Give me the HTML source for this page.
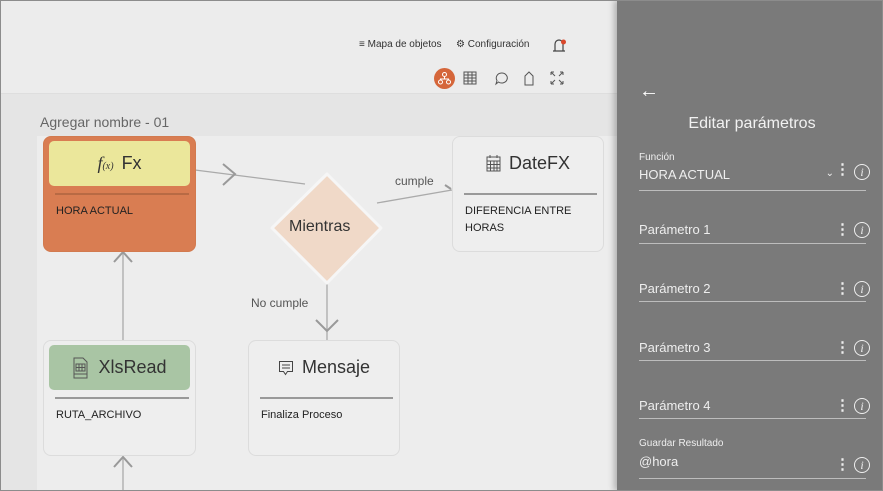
<!DOCTYPE html>
<html><head><meta charset="utf-8"><style>
*{margin:0;padding:0;box-sizing:border-box}
body{width:883px;height:491px;overflow:hidden;background:#e5e5e5;font-family:"Liberation Sans",sans-serif;position:relative}
.a{position:absolute}
.card{position:absolute;border:1px solid #dcdcdc;border-radius:8px;background:#eeeeee}
.hd{position:absolute;left:5px;right:5px;top:4px;height:45px;border-radius:5px;font-size:18px;color:#333;display:flex;align-items:center;justify-content:center;gap:8px}
.ln{position:absolute;left:11px;right:6px;top:56px;height:2px;background:#999}
.tx{position:absolute;left:12px;top:66px;font-size:11px;color:#222;line-height:17px}
.pl{position:absolute;left:639px;width:227px;color:#eee}
.pl .u{position:absolute;left:0;right:0;height:1px;background:#bdbdbd}
.ic{position:absolute;right:-4px;width:16px;height:16px;border:1.3px solid #eee;border-radius:50%;font-family:"Liberation Serif",serif;font-style:italic;font-size:12px;text-align:center;line-height:14px}
.dt{position:absolute;right:16px;font-size:15px;font-weight:bold;line-height:10px}
</style></head><body>
<div class="a" style="left:0;top:0;width:883px;height:491px;border:1px solid #8c8c8c;z-index:10;pointer-events:none"></div>
<div class="a" style="left:0;top:0;width:620px;height:94px;background:#ececec;border-bottom:1px solid #dedede"></div>
<div class="a" style="left:37px;top:136px;width:580px;height:355px;background:#ededed"></div>
<div class="a" style="left:359px;top:39px;font-size:10px;color:#333">≡ Mapa de objetos</div>
<div class="a" style="left:456px;top:39px;font-size:10px;color:#333">⚙ Configuración</div>
<svg class="a" style="left:548px;top:36px" width="22" height="18"><path d="M5 15h12M7 15V8a4 4 0 0 1 8 0v7" fill="none" stroke="#444" stroke-width="1.2"/><circle cx="15.5" cy="6" r="2.5" fill="#d9472b"/></svg>
<div class="a" style="left:434px;top:68px;width:21px;height:21px;border-radius:50%;background:#d5663a"></div>
<svg class="a" style="left:437px;top:71px" width="15" height="15"><g fill="none" stroke="#fff" stroke-width="1"><circle cx="7.5" cy="3.5" r="2"/><circle cx="3.5" cy="11" r="2"/><circle cx="11.5" cy="11" r="2"/><path d="M7.5 5.5v2.5M3.5 9V8h8v1"/></g></svg>
<svg class="a" style="left:463px;top:71px" width="14" height="14"><g fill="none" stroke="#555" stroke-width="1"><rect x="1" y="1" width="12" height="12"/><path d="M1 4h12M1 7h12M1 10h12M5 1v12M9 1v12"/></g></svg>
<svg class="a" style="left:494px;top:71px" width="15" height="15"><path d="M7.5 2a5.5 5 0 1 1-3 9l-2.5 2 1-3.5A5.5 5 0 0 1 7.5 2z" fill="none" stroke="#555"/></svg>
<svg class="a" style="left:522px;top:70px" width="14" height="16"><path d="M3 15V6l4-4 4 4v9z" fill="none" stroke="#555"/></svg>
<svg class="a" style="left:550px;top:71px" width="14" height="14"><path d="M1 1l4 4M13 1l-4 4M1 13l4-4M13 13l-4-4M1 1h3M1 1v3M13 1h-3M13 1v3M1 13h3M1 13v-3M13 13h-3M13 13v-3" stroke="#555" fill="none"/></svg>
<div class="a" style="left:40px;top:114px;font-size:14px;color:#666">Agregar nombre - 01</div>

<svg class="a" style="left:0;top:0" width="620" height="491"><g fill="none" stroke="#aaa" stroke-width="1.3">
<path d="M195 170L305 184M377 203L452 190M123 252V340M123 457V491M327 283V340"/></g>
<g fill="none" stroke="#999" stroke-width="2"><path d="M223 164l12 10-12 11M114 262l9-10 9 10M114 467l9-10 9 10M316 320l11 11 11-11M445 185l6 4"/></g>
<path d="M327 174L381 228 327 283 272 228Z" fill="#f0d9c8" stroke="#f6f6f6" stroke-width="3" stroke-linejoin="round"/>
</svg>
<div class="a" style="left:289px;top:218px;font-size:16px;color:#333">Mientras</div>
<div class="a" style="left:395px;top:174px;font-size:12px;color:#555">cumple</div>
<div class="a" style="left:251px;top:296px;font-size:12px;color:#555">No cumple</div>

<div class="card" style="left:43px;top:136px;width:153px;height:116px;background:#d97d52;border-color:#d27a4f">
<div class="hd" style="background:#ebe79b"><span style="font-family:'Liberation Serif',serif;font-style:italic">f<small style="font-size:10px">(x)</small></span>Fx</div>
<div class="ln" style="background:#b86a44"></div><div class="tx">HORA ACTUAL</div></div>

<div class="card" style="left:452px;top:136px;width:152px;height:116px">
<div class="hd"><svg width="15" height="17"><g fill="none" stroke="#555"><rect x="1" y="2" width="13" height="14"/><path d="M1 6h13M1 9.5h13M1 13h13M4.5 6v10M8 6v10M11 6v10M4 0v3M11 0v3"/></g></svg>DateFX</div>
<div class="ln"></div><div class="tx">DIFERENCIA ENTRE<br>HORAS</div></div>

<div class="card" style="left:43px;top:340px;width:153px;height:116px">
<div class="hd" style="background:#a9c5a4"><svg width="18" height="22"><g fill="none" stroke="#555"><path d="M2 1h9l4 4v16H2z"/><rect x="4" y="7" width="9" height="7"/><path d="M4 10.5h9M7 7v7M10 7v7M2 17h13"/></g></svg>XlsRead</div>
<div class="ln"></div><div class="tx">RUTA_ARCHIVO</div></div>

<div class="card" style="left:248px;top:340px;width:152px;height:116px">
<div class="hd"><svg width="16" height="16"><path d="M1.5 1.5h13v10h-5l-2 3-2-3h-4z M4 5h8M4 8h8" fill="none" stroke="#444"/></svg>Mensaje</div>
<div class="ln"></div><div class="tx">Finaliza Proceso</div></div>

<div class="a" style="left:617px;top:0;width:266px;height:491px;background:#7a7a7a;box-shadow:-3px 0 6px rgba(0,0,0,.25)"></div>
<div class="a" style="left:639px;top:80px;color:#fff;font-size:20px">&#8592;</div>
<div class="a" style="left:617px;top:115px;width:270px;text-align:center;font-size:16px;color:#f2f2f2">Editar parámetros</div>

<div class="pl" style="top:152px"><div style="font-size:10px">Función</div><div style="font-size:13px;margin-top:4px">HORA ACTUAL</div><div class="a" style="right:32px;top:16px;font-size:10px">⌄</div><div class="dt" style="top:13px">⋮</div><div class="ic" style="top:12px">i</div><div class="u" style="top:38px"></div></div>
<div class="pl" style="top:222px"><div style="font-size:13px">Parámetro 1</div><div class="dt" style="top:3px">⋮</div><div class="ic" style="top:0">i</div><div class="u" style="top:21px"></div></div>
<div class="pl" style="top:281px"><div style="font-size:13px">Parámetro 2</div><div class="dt" style="top:3px">⋮</div><div class="ic" style="top:0">i</div><div class="u" style="top:20px"></div></div>
<div class="pl" style="top:340px"><div style="font-size:13px">Parámetro 3</div><div class="dt" style="top:3px">⋮</div><div class="ic" style="top:0">i</div><div class="u" style="top:20px"></div></div>
<div class="pl" style="top:398px"><div style="font-size:13px">Parámetro 4</div><div class="dt" style="top:3px">⋮</div><div class="ic" style="top:0">i</div><div class="u" style="top:20px"></div></div>
<div class="pl" style="top:438px"><div style="font-size:10px">Guardar Resultado</div><div style="font-size:13px;margin-top:5px">@hora</div><div class="dt" style="top:22px">⋮</div><div class="ic" style="top:19px">i</div><div class="u" style="top:40px"></div></div>
</body></html>
